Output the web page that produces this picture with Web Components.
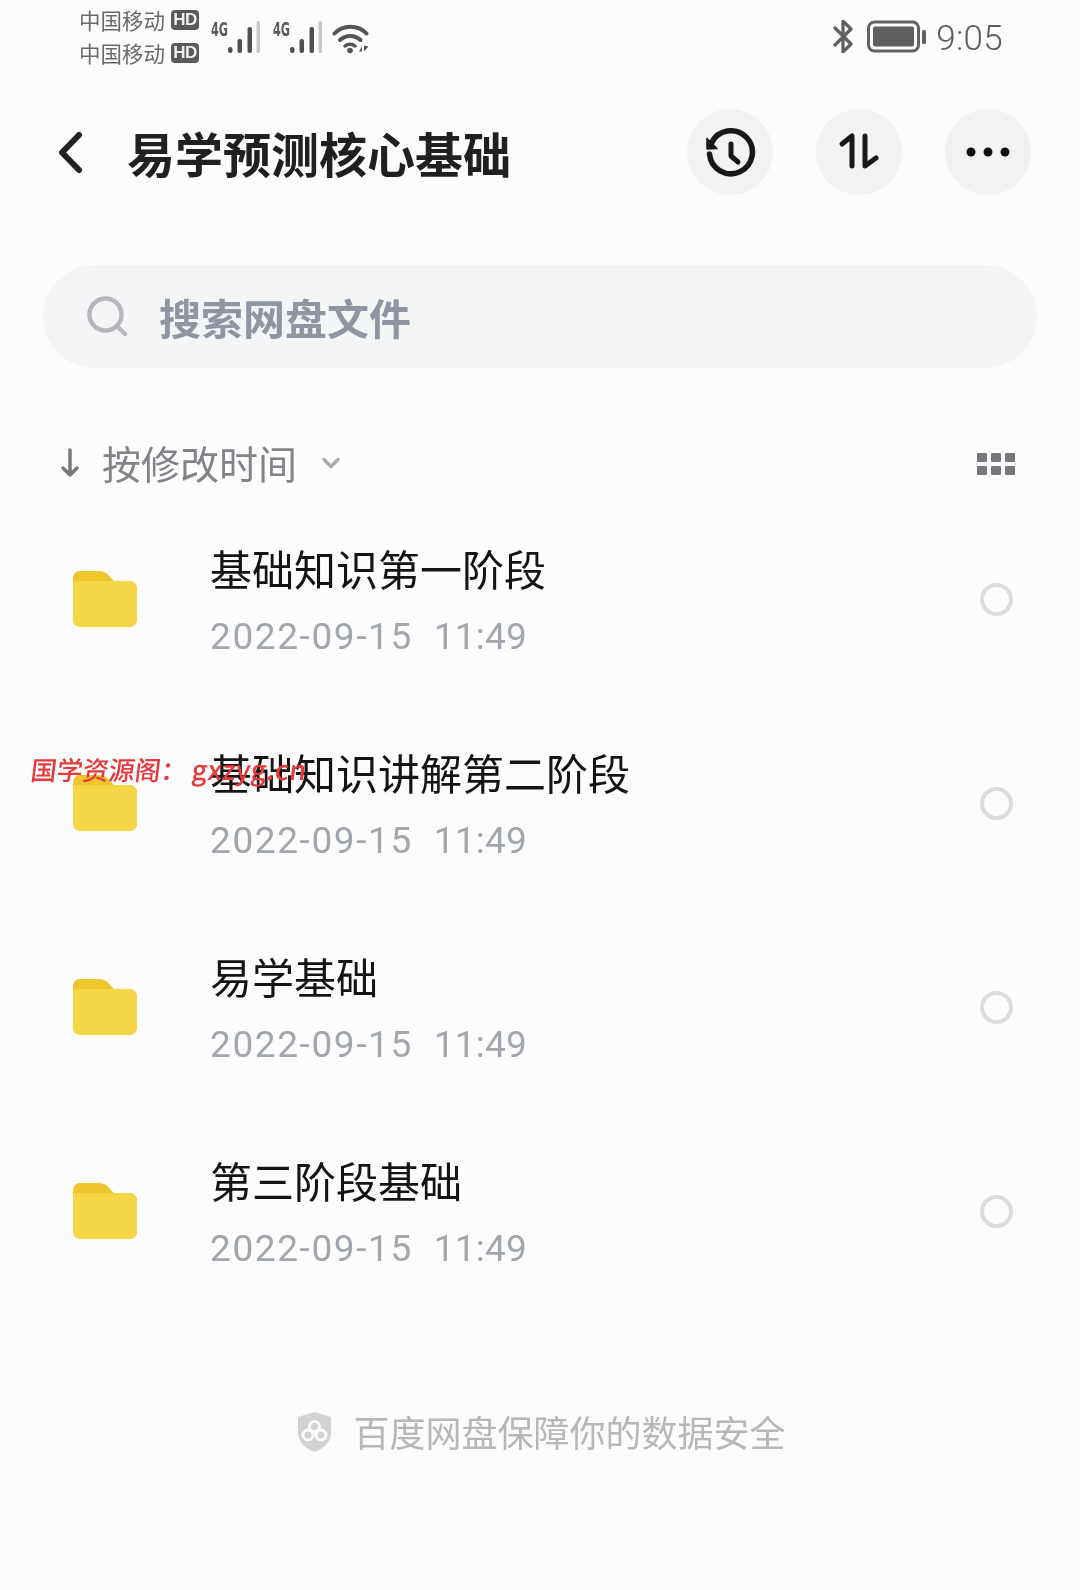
<!DOCTYPE html>
<html lang="zh-CN">
<head>
<meta charset="utf-8">
<title>易学预测核心基础</title>
<style>
html,body{margin:0;padding:0;background:#fcfcfc;}
body{width:1080px;height:1590px;overflow:hidden;position:relative;font-family:"Noto Sans CJK SC","Noto Sans",sans-serif;}
</style>
</head>
<body>
<app-screen>
  <status-bar></status-bar>
  <nav-bar title-text="易学预测核心基础"></nav-bar>
  <search-box>搜索网盘文件</search-box>
  <sort-bar>按修改时间</sort-bar>
  <file-row date="2022-09-15" time="11:49">基础知识第一阶段</file-row>
  <file-row date="2022-09-15" time="11:49">基础知识讲解第二阶段</file-row>
  <file-row date="2022-09-15" time="11:49">易学基础</file-row>
  <file-row date="2022-09-15" time="11:49">第三阶段基础</file-row>
  <safe-footer>百度网盘保障你的数据安全</safe-footer>
  <water-mark>国学资源阁：<span style="margin-left:5px;font-size:27px;letter-spacing:.4px">gxzyg.cn</span></water-mark>
</app-screen>
<script>
const CJK='"Noto Sans CJK SC","Noto Sans",sans-serif';
function def(name,html,init){
  customElements.define(name,class extends HTMLElement{
    constructor(){super();const r=this.attachShadow({mode:'open'});r.innerHTML=html;if(init)init(this,r);}
  });
}
def('app-screen',`<style>:host{display:block;width:1080px;height:1590px;position:relative;background:#fcfcfc;overflow:hidden;filter:blur(.4px)}</style><slot></slot>`);

const signal=`<svg width="50" height="33" viewBox="0 0 50 33" style="display:block;overflow:visible">
<text x="0" y="15" font-family="'DejaVu Sans Condensed','DejaVu Sans',sans-serif" font-weight="700" font-size="20" fill="#5a5a5a" textLength="17" lengthAdjust="spacingAndGlyphs">4G</text>
<rect x="17" y="26" width="4.500" height="6" rx="2" fill="#505050"/>
<rect x="26.500" y="18" width="4.500" height="14" rx="2" fill="#505050"/>
<rect x="36.500" y="6" width="4.500" height="26" rx="2" fill="#505050"/>
<rect x="45.500" y="0" width="3.500" height="32" rx="1.500" fill="#c9c9c9"/>
</svg>`;

def('hd-badge',`<style>:host{display:inline-flex;align-items:center;justify-content:center;width:28px;height:20px;border-radius:4px;background:#5a5a5a;color:#f0f0f0;font:700 17px/20px "Liberation Sans",sans-serif;letter-spacing:-.5px}</style>HD`);

def('status-bar',`<style>
:host{display:flex;box-sizing:border-box;height:72px;padding:3px 77px 0 79px;color:#666;align-items:flex-start}
.carriers{display:flex;flex-direction:column;width:120px}
.c{display:flex;align-items:center;height:33px;font:400 21.500px/33px ${CJK};color:#6a6a6a}
hd-badge{margin-left:6px}
.net{display:flex;gap:12px;margin:18px 0 0 12px}
.wifi{margin-left:-3px}
.right{margin-left:auto;display:flex;align-items:flex-start;margin-top:17px}
.time{font:300 35px/33px Roboto,sans-serif;color:#5e5e5e;margin:2px 0 0 9px;letter-spacing:.3px}
.bt{margin-right:13px}
</style>
<div class="carriers"><div class="c">中国移动<hd-badge></hd-badge></div><div class="c">中国移动<hd-badge></hd-badge></div></div>
<div class="net">${signal}${signal}
<svg class="wifi" width="38" height="33" viewBox="0 0 38 33" style="display:block">
<path d="M2.500 12.500C11 3.500 26 3.500 34.500 12.500" fill="none" stroke="#555" stroke-width="4" stroke-linecap="round"/>
<path d="M8 19C13.500 13.500 23 13.500 28.500 19" fill="none" stroke="#555" stroke-width="4" stroke-linecap="round"/>
<path d="M13 25C16 22.500 20 22.500 23 25" fill="none" stroke="#555" stroke-width="3.500" stroke-linecap="round"/>
<circle cx="18" cy="29.500" r="2.800" fill="#555"/>
<path d="M27 30.500l3-5v5zM32 24.500v6l4.500-5z" fill="#555"/>
</svg></div>
<div class="right">
<svg class="bt" width="21" height="33" viewBox="0 0 21 33" style="display:block"><path d="M2 8L18 24L10 32V1L18 9L2 25" fill="none" stroke="#5f5f5f" stroke-width="3.200" stroke-linejoin="round" stroke-linecap="round"/></svg>
<svg width="60" height="33" viewBox="0 0 60 33" style="display:block"><rect x="1.500" y="2" width="50" height="29" rx="6" fill="none" stroke="#626262" stroke-width="3"/><rect x="6" y="6.500" width="41" height="20" rx="2" fill="#5f5f5f"/><rect x="55" y="10" width="4" height="14" rx="1.500" fill="#626262"/></svg>
<div class="time">9:05</div></div>`);

def('round-btn',`<style>:host{display:flex;width:86px;height:86px;border-radius:50%;background:#f2f2f2;align-items:center;justify-content:center}</style><slot></slot>`);

def('nav-bar',`<style>
:host{display:flex;align-items:center;box-sizing:border-box;height:160px;padding:0 49px 0 56px}
svg{display:block}
h1{margin:0 0 0 44px;font:700 48px/60px ${CJK};color:#202020;white-space:nowrap}
.acts{margin-left:auto;display:flex;gap:43px}
.hist{transform:translate(1px,2px)}
</style>
<svg width="27" height="44" viewBox="0 0 27 44"><path d="M23 5L6 22.500L23 40" fill="none" stroke="#222" stroke-width="6" stroke-linecap="round" stroke-linejoin="round"/></svg>
<h1></h1>
<div class="acts">
<round-btn><svg class="hist" width="54" height="54" viewBox="0 0 54 54"><path d="M7.500 16A21.500 21.500 0 1 1 5.500 27" fill="none" stroke="#17181a" stroke-width="5.500" stroke-linecap="round"/><path d="M3 11.500L13 21.500L3 22Z" fill="#17181a" stroke="#17181a" stroke-width="1.500" stroke-linejoin="round"/><path d="M27 17V29L34 35" fill="none" stroke="#17181a" stroke-width="5" stroke-linecap="round" stroke-linejoin="round"/></svg></round-btn>
<round-btn><svg width="54" height="54" viewBox="0 0 54 54"><path d="M10 19L20 11V41" fill="none" stroke="#17181a" stroke-width="5" stroke-linecap="round" stroke-linejoin="round"/><path d="M33 11V41L44 33" fill="none" stroke="#17181a" stroke-width="5" stroke-linecap="round" stroke-linejoin="round"/></svg></round-btn>
<round-btn><svg width="54" height="12" viewBox="0 0 54 12"><circle cx="10" cy="6" r="4.500" fill="#111"/><circle cx="27" cy="6" r="4.500" fill="#111"/><circle cx="44" cy="6" r="4.500" fill="#111"/></svg></round-btn>
</div>`,(h,r)=>{r.querySelector('h1').textContent=h.getAttribute('title-text');});

def('search-box',`<style>
:host{display:flex;align-items:center;box-sizing:border-box;height:103px;margin:33px 43px 0;padding-left:44px;border-radius:52px;background:#f4f5f7;color:#8f96a2;font:700 42px/60px ${CJK}}
svg{display:block;margin-right:31px}
</style>
<svg width="41" height="41" viewBox="0 0 41 41"><circle cx="18.500" cy="18.500" r="16" fill="none" stroke="#b6b8bb" stroke-width="4.500"/><path d="M30 30L38 38" stroke="#b6b8bb" stroke-width="4.500" stroke-linecap="round"/></svg><slot></slot>`);

def('sort-bar',`<style>
:host{display:flex;align-items:center;box-sizing:border-box;height:64px;margin:63px 0 2px;padding:0 65px 0 61px;color:#808387;font:400 39px/64px ${CJK}}
svg{display:block}
.t{margin-left:23px;transform:translateY(-1px)}
.ch{margin-left:25px}
.grid{margin-left:auto;display:grid;grid-template-columns:repeat(3,10px);grid-auto-rows:9px;gap:4px;transform:translateY(1px)}
.grid i{background:#77787d;border-radius:1px}
</style>
<svg width="18" height="30" viewBox="0 0 18 30"><path d="M9 2V27M2 20L9 27L16 20" fill="none" stroke="#77797c" stroke-width="3.500" stroke-linecap="round" stroke-linejoin="round"/></svg>
<span class="t"><slot></slot></span>
<svg class="ch" width="18" height="12" viewBox="0 0 18 12"><path d="M2 2.500L9 9.500L16 2.500" fill="none" stroke="#a9abae" stroke-width="3.500" stroke-linecap="round" stroke-linejoin="round"/></svg>
<div class="grid"><i></i><i></i><i></i><i></i><i></i><i></i></div>`);

def('file-row',`<style>
:host{display:flex;align-items:center;box-sizing:border-box;height:204px;padding:0 67px 0 73px}
svg{display:block;flex:none}
.txt{display:flex;flex-direction:column;margin-left:73px;padding-top:2px}
.n{font:400 42px/60px ${CJK};color:#141414;white-space:nowrap}
.d{font:400 37px/50px Roboto,sans-serif;color:#a2a7ad;margin-top:14px;white-space:nowrap;display:flex}
.dd{letter-spacing:1.600px}
.tt{letter-spacing:.2px;margin-left:21px}
.r{margin-left:auto;width:33px;height:33px;box-sizing:border-box;border:4px solid #dcdcdc;border-radius:50%}
</style>
<svg width="64" height="56" viewBox="0 0 64 56"><path d="M0 7a7 7 0 0 1 7-7H25c6 0 9 2 12 6l4 4H56a8 8 0 0 1 8 8V30H0Z" fill="#efc52e"/><path d="M0 13c0-2 1-3 3-3H56a8 8 0 0 1 8 8V49a7 7 0 0 1-7 7H7a7 7 0 0 1-7-7Z" fill="#f6d547"/></svg>
<div class="txt"><div class="n"><slot></slot></div><div class="d"><span class="dd"></span><span class="tt"></span></div></div>
<div class="r"></div>`,(h,r)=>{r.querySelector('.dd').textContent=h.getAttribute('date');r.querySelector('.tt').textContent=h.getAttribute('time');});

def('safe-footer',`<style>
:host{display:flex;align-items:center;justify-content:center;height:60px;margin-top:88px;padding-left:3px;color:#b7b7b7;font:400 36px/60px ${CJK}}
svg{display:block;margin-right:21px;transform:translateY(1px)}
</style>
<svg width="35" height="40" viewBox="0 0 35 40"><path d="M17.500 0L34 5V21C34 30 26 37 17.500 40C9 37 1 30 1 21V5Z" fill="#d2d2d2"/><circle cx="17.500" cy="14.500" r="5" fill="none" stroke="#fcfcfc" stroke-width="3"/><circle cx="11" cy="23" r="5" fill="none" stroke="#fcfcfc" stroke-width="3"/><circle cx="24" cy="23" r="5" fill="none" stroke="#fcfcfc" stroke-width="3"/></svg><slot></slot>`);

def('water-mark',`<style>
:host{position:absolute;left:31px;top:750px;display:block;transform:skewX(-7deg);font:500 26px/38px ${CJK};color:#e5393c;white-space:nowrap}
</style><slot></slot>`);
</script>
</body>
</html>
